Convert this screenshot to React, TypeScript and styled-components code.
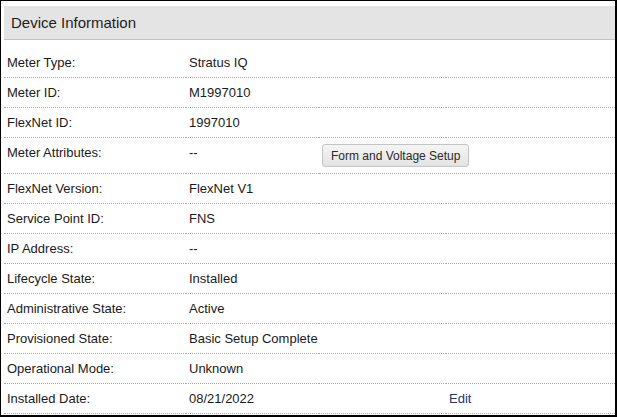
import styled, { createGlobalStyle } from 'styled-components';

interface DeviceRow {
  label: string;
  value: string;
  action?: 'setup' | 'edit';
}

const rows: DeviceRow[] = [
  { label: 'Meter Type:', value: 'Stratus IQ' },
  { label: 'Meter ID:', value: 'M1997010' },
  { label: 'FlexNet ID:', value: '1997010' },
  { label: 'Meter Attributes:', value: '--', action: 'setup' },
  { label: 'FlexNet Version:', value: 'FlexNet V1' },
  { label: 'Service Point ID:', value: 'FNS' },
  { label: 'IP Address:', value: '--' },
  { label: 'Lifecycle State:', value: 'Installed' },
  { label: 'Administrative State:', value: 'Active' },
  { label: 'Provisioned State:', value: 'Basic Setup Complete' },
  { label: 'Operational Mode:', value: 'Unknown' },
  { label: 'Installed Date:', value: '08/21/2022', action: 'edit' },
];

const GlobalStyle = createGlobalStyle`
  html, body {
    margin: 0;
    padding: 0;
    background: #fff;
  }
  body {
    font-family: "Liberation Sans", Arial, sans-serif;
    color: #1a1a1a;
  }
`;

const Frame = styled.div`
  box-sizing: border-box;
  width: 617px;
  height: 417px;
  border-style: solid;
  border-color: #000;
  border-width: 1px 2px 2px 1px;
  padding: 5px 0 0 3px;
  overflow: hidden;
`;

const Header = styled.h2`
  margin: 0;
  height: 33px;
  line-height: 33px;
  padding-left: 7px;
  background: #e4e4e4;
  border-bottom: 1px solid #c2c2c2;
  font-size: 15px;
  font-weight: normal;
  color: #1e1e1e;
`;

const Table = styled.div`
  margin-top: 8px;
  display: grid;
  grid-template-columns: 182px 133px 127px 1fr;
`;

const Cell = styled.div<{ $span?: number }>`
  grid-column: span ${({ $span }) => $span ?? 1};
  padding: 7px 3px;
  font-size: 13px;
  line-height: 15px;
  border-bottom: 1px dotted #aaa;
  white-space: nowrap;
`;

const ButtonCell = styled(Cell)`
  padding: 6px 3px;
`;

const SetupButton = styled.button`
  height: 23px;
  padding: 0 8px;
  font-family: "Liberation Sans", Arial, sans-serif;
  font-size: 12px;
  color: #2a2a2a;
  background: linear-gradient(#f5f5f5, #e3e3e3);
  border: 1px solid #c4c4c4;
  border-radius: 3px;
  cursor: pointer;
`;

const EditLink = styled.a`
  color: #24356e;
  text-decoration: none;
  cursor: pointer;
`;

function App() {
  return (
    <>
      <GlobalStyle />
      <Frame>
        <Header>Device Information</Header>
        <Table>
          {rows.map(row => (
            <Row key={row.label} row={row} />
          ))}
        </Table>
      </Frame>
    </>
  );
}

function Row({ row }: { row: DeviceRow }) {
  return (
    <>
      <Cell>{row.label}</Cell>
      <Cell>{row.value}</Cell>
      {row.action === 'setup' ? (
        <ButtonCell $span={2}>
          <SetupButton>Form and Voltage Setup</SetupButton>
        </ButtonCell>
      ) : (
        <>
          <Cell />
          <Cell>{row.action === 'edit' && <EditLink>Edit</EditLink>}</Cell>
        </>
      )}
    </>
  );
}

export default App;
